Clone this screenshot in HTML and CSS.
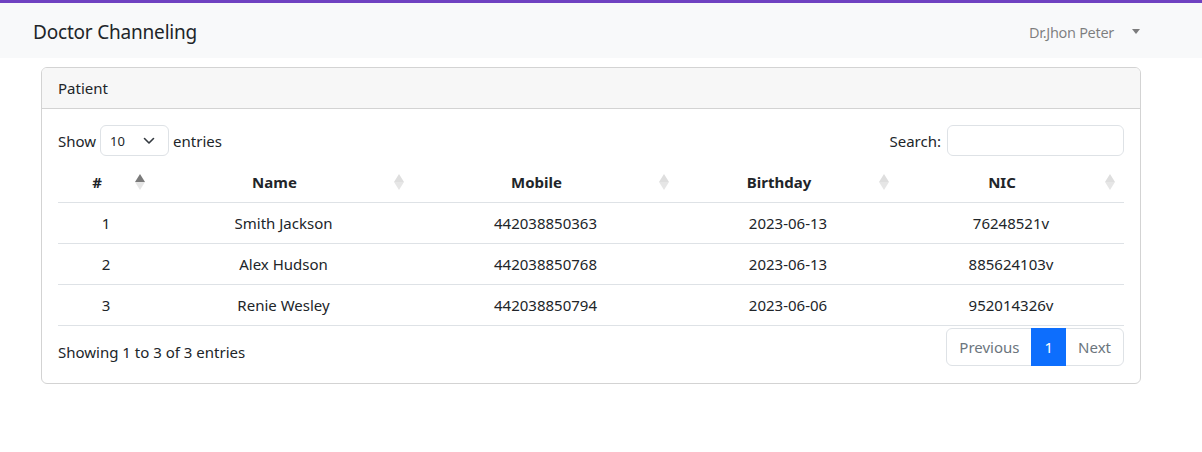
FILE: index.html
```html
<!DOCTYPE html>
<html>
<head>
<meta charset="utf-8">
<link rel="stylesheet" href="styles.css">
</head>
<body>
<nav class="navbar">
  <span class="brand">Doctor Channeling</span>
  <span class="user">Dr.Jhon Peter<span class="caret"></span></span>
</nav>
<main class="page">
  <section class="card">
    <div class="card-header">Patient</div>
    <div class="card-body">
      <div class="controls">
        <label class="length">Show
          <span class="select">10
            <svg width="12" height="8" viewBox="0 0 12 8"><path d="M1.5 1.5 6 6l4.5-4.5" fill="none" stroke="#343a40" stroke-width="1.6" stroke-linecap="round" stroke-linejoin="round"/></svg>
          </span>
          entries</label>
        <label class="search">Search: <span class="input"></span></label>
      </div>
      <table class="table">
        <colgroup>
          <col class="c1"><col class="c2"><col class="c3"><col class="c4"><col class="c5">
        </colgroup>
        <thead>
          <tr>
            <th class="asc">#</th>
            <th>Name</th>
            <th>Mobile</th>
            <th>Birthday</th>
            <th>NIC</th>
          </tr>
        </thead>
        <tbody>
          <tr><td>1</td><td>Smith Jackson</td><td>442038850363</td><td>2023-06-13</td><td>76248521v</td></tr>
          <tr><td>2</td><td>Alex Hudson</td><td>442038850768</td><td>2023-06-13</td><td>885624103v</td></tr>
          <tr><td>3</td><td>Renie Wesley</td><td>442038850794</td><td>2023-06-06</td><td>952014326v</td></tr>
        </tbody>
      </table>
      <div class="footer">
        <div class="info">Showing 1 to 3 of 3 entries</div>
        <ul class="pagination">
          <li class="page-item disabled">Previous</li>
          <li class="page-item active">1</li>
          <li class="page-item disabled">Next</li>
        </ul>
      </div>
    </div>
  </section>
</main>
</body>
</html>
```

FILE: styles.css
```css
* { box-sizing: border-box; }
html, body { margin: 0; padding: 0; }
body {
  font-family: "Noto Sans", "Open Sans", sans-serif;
  font-size: 16px;
  line-height: 24px;
  color: #212529;
  background: #fff;
  border-top: 3px solid #6f42c1;
}
.navbar {
  height: 55px;
  background: #f8f9fa;
  display: flex;
  align-items: center;
  justify-content: space-between;
  padding: 2px 62px 0 33px;
}
.brand { font-size: 19px; letter-spacing: -0.2px; color: #212529; }
.user {
  color: rgba(0,0,0,.5);
  font-size: 14.5px;
  letter-spacing: -0.3px;
  display: flex;
  align-items: center;
}
.caret {
  display: inline-block;
  margin-left: 18px;
  border-top: 5px solid rgba(0,0,0,.5);
  border-left: 4px solid transparent;
  border-right: 4px solid transparent;
}
.page { padding: 9px 0 0 41px; }
.card {
  width: 1100px;
  border: 1px solid #d3d3d3;
  border-radius: 6px;
  overflow: hidden;
}
.card-header {
  height: 41px;
  padding: 8px 16px;
  background: #f7f7f7;
  border-bottom: 1px solid #d3d3d3;
  font-size: 15px;
}
.card-body { padding: 16px 16px 17px 16px; }
.controls {
  display: flex;
  justify-content: space-between;
  align-items: center;
  height: 31px;
  font-size: 15px;
}
.length, .search { display: flex; align-items: center; }
.select {
  display: inline-flex;
  align-items: center;
  justify-content: space-between;
  width: 69px;
  height: 31px;
  margin: 0 4px;
  padding: 0 13px 0 9px;
  border: 1px solid #dee2e6;
  border-radius: 6px;
  font-size: 13px;
}
.input {
  display: inline-block;
  width: 177px;
  height: 31px;
  margin-left: 6px;
  border: 1px solid #dee2e6;
  border-radius: 6px;
}
.table {
  width: 1066px;
  margin-top: 6px;
  border-collapse: collapse;
  table-layout: fixed;
}
.c1 { width: 96px; }
.c2 { width: 259px; }
.c3 { width: 265px; }
.c4 { width: 220px; }
.c5 { width: 226px; }
th, td {
  text-align: center;
  border-bottom: 1px solid #dee2e6;
  padding: 8px;
  font-size: 15px;
}
th {
  position: relative;
  padding-right: 26px;
  font-weight: 700;
  height: 40px;
}
th::before, th::after {
  content: "";
  position: absolute;
  right: 9px;
  width: 0;
  height: 0;
  border-left: 5px solid transparent;
  border-right: 5px solid transparent;
}
th::before {
  top: 12px;
  border-bottom: 8px solid #dedede;
}
th::after {
  top: 20px;
  border-top: 8px solid #e6e6e6;
}
th.asc::before { border-bottom-color: #7a7a7a; }
td { height: 41px; }
.footer {
  display: flex;
  justify-content: space-between;
  align-items: flex-start;
  margin-top: 2px;
  font-size: 15px;
}
.info { padding-top: 12px; }
.pagination {
  display: flex;
  list-style: none;
  margin: 0;
  padding: 0;
}
.page-item {
  height: 38px;
  padding: 6px 12px;
  border: 1px solid #dee2e6;
  color: #6c757d;
  line-height: 24px;
  font-size: 15px;
}
.page-item + .page-item { margin-left: -1px; }
.page-item:first-child { border-radius: 6px 0 0 6px; }
.page-item:last-child { border-radius: 0 6px 6px 0; }
.page-item.active {
  background: #0d6efd;
  border-color: #0d6efd;
  color: #fff;
  position: relative;
}
```
